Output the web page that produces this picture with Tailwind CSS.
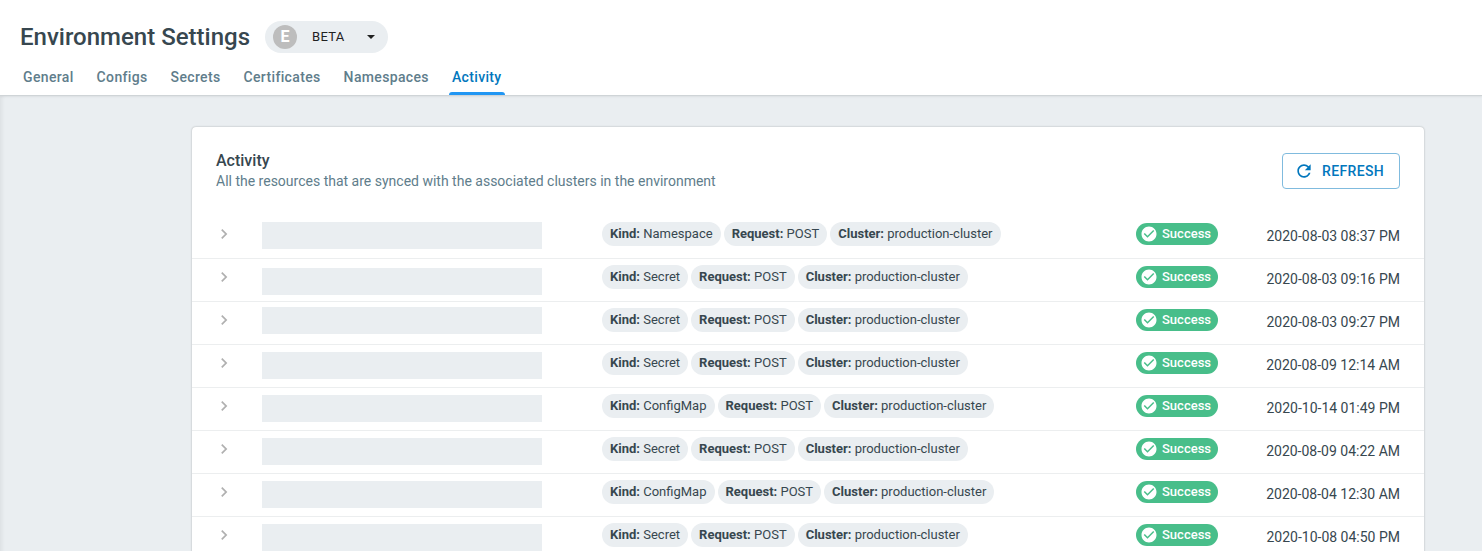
<!DOCTYPE html>
<html lang="en">
<head>
<meta charset="utf-8">
<meta name="viewport" content="width=device-width, initial-scale=1">
<title>Environment Settings</title>
<script src="https://cdn.jsdelivr.net/npm/@tailwindcss/browser@4"></script>
</head>
<body class="min-h-screen overflow-x-hidden bg-[#eaeef1] font-['Roboto',sans-serif] text-[#37474f]">
<svg class="hidden" aria-hidden="true">
  <symbol id="chevron" viewBox="0 0 24 24"><path d="M10 6 8.590 7.410 13.170 12l-4.580 4.590L10 18l6-6z" fill="currentColor"/></symbol>
  <symbol id="check" viewBox="0 0 24 24"><path d="M12 2C6.480 2 2 6.480 2 12s4.480 10 10 10 10-4.480 10-10S17.520 2 12 2zm-2 15-5-5 1.410-1.410L10 14.170l7.590-7.590L19 8l-9 9z" fill="currentColor"/></symbol>
</svg>
<header class="relative border-b border-[#cfd4d7] bg-white px-5 pt-5 shadow-[0_1px_2px_rgba(0,0,0,0.06)]">
  <div class="flex h-8 items-center gap-[15px] pt-[2px]">
    <h1 class="text-2xl font-medium">Environment Settings</h1>
    <button type="button" class="flex h-8 w-[123px] items-center rounded-full bg-[#eaeef1] pr-[11px] pl-2 text-[13px] text-[#212121]">
      <span class="flex size-6 items-center justify-center rounded-full bg-[#bdbdbd] text-base font-bold text-white">E</span>
      <span class="ml-[15px] tracking-wide">BETA</span>
      <svg class="ml-auto size-3" viewBox="0 0 12 12" aria-hidden="true"><path d="M2 4h8L6 8z" fill="currentColor"/></svg>
    </button>
  </div>
  <nav class="mt-2 flex gap-[17px] text-sm font-medium tracking-wide text-[#607d8b]">
    <a href="#general" class="px-[3px] pt-[7px] pb-2">General</a>
    <a href="#configs" class="px-[3px] pt-[7px] pb-2">Configs</a>
    <a href="#secrets" class="px-[3px] pt-[7px] pb-2">Secrets</a>
    <a href="#certificates" class="px-[3px] pt-[7px] pb-2">Certificates</a>
    <a href="#namespaces" class="px-[3px] pt-[7px] pb-2">Namespaces</a>
    <a href="#activity" aria-current="page" class="relative px-[3px] pt-[7px] pb-2 text-[#0277bd]">Activity<span class="absolute inset-x-0 bottom-0 h-[3px] rounded-t bg-[#2196f3]"></span></a>
  </nav>
</header>
<main class="pt-[31px] pr-[58px] pl-48 shadow-[inset_4px_0_4px_-2px_rgba(0,0,0,0.06)]">
  <section class="rounded bg-white pb-6 shadow-[0_0_2px_rgba(0,0,0,0.3)]">
    <div class="flex items-start justify-between px-6 pt-[26px] pb-[25px]">
      <div class="-mt-[2px]">
        <h2 class="text-base leading-5 font-medium">Activity</h2>
        <p class="text-sm text-[#607d8b]">All the resources that are synced with the associated clusters in the environment</p>
      </div>
      <button type="button" class="flex h-9 w-[118px] items-center rounded border border-[#80bbde] pl-[11px] text-sm font-medium text-[#0277bd]">
        <svg class="size-5" viewBox="0 0 24 24" aria-hidden="true"><path d="M17.650 6.350C16.200 4.900 14.210 4 12 4c-4.420 0-7.990 3.580-7.990 8s3.570 8 7.990 8c3.730 0 6.840-2.550 7.730-6h-2.080c-.82 2.330-3.040 4-5.650 4-3.310 0-6-2.690-6-6s2.690-6 6-6c1.660 0 3.140.69 4.220 1.780L13 11h7V4l-2.350 2.350z" fill="currentColor"/></svg>
        <span class="ml-2 tracking-wide">REFRESH</span>
      </button>
    </div>
    <table class="w-full table-fixed border-separate border-spacing-0">
      <colgroup><col class="w-[70px]"><col class="w-[340px]"><col><col class="w-[110px]"><col class="w-[178px]"></colgroup>
      <tbody id="rows"></tbody>
    </table>
  </section>
</main>
<script>
  const entries = [
    ["Namespace", "2020-08-03 08:37 PM", "mt-[6px]"],
    ["Secret", "2020-08-03 09:16 PM", "mt-[9px]"],
    ["Secret", "2020-08-03 09:27 PM", "mt-[5px]"],
    ["Secret", "2020-08-09 12:14 AM", "mt-[7px]"],
    ["ConfigMap", "2020-10-14 01:49 PM", "mt-[7px]"],
    ["Secret", "2020-08-09 04:22 AM", "mt-[7px]"],
    ["ConfigMap", "2020-08-04 12:30 AM", "mt-[7px]"],
    ["Secret", "2020-10-08 04:50 PM", "mt-[7px]"],
  ];
  const chip = (label, value) =>
    `<span class="h-6 rounded-full bg-[#eaeef1] px-2 text-[13px] leading-6 whitespace-nowrap"><b class="font-bold">${label}:</b> ${value}</span>`;
  document.getElementById("rows").innerHTML = entries.map(([kind, time, bar]) => `
    <tr class="h-[43px] align-top *:border-b *:border-[#eceeef]">
      <td class="pt-2 pl-[22px]"><button type="button" aria-label="Expand row" class="block text-[#b0b0b0]"><svg class="size-5"><use href="#chevron"/></svg></button></td>
      <td><div class="${bar} h-[27px] w-[280px] bg-[#eaeef1]"></div></td>
      <td class="pt-[6px]"><div class="flex gap-[3px]">${chip("Kind", kind)}${chip("Request", "POST")}${chip("Cluster", "production-cluster")}</div></td>
      <td class="pt-[7px]"><span class="flex h-[22px] w-[82px] items-center gap-1 rounded-full bg-[#48be8a] pl-1 text-[13px] font-medium text-white"><svg class="size-[18px]"><use href="#check"/></svg>Success</span></td>
      <td class="pt-[10px] pr-6 text-right text-sm whitespace-nowrap">${time}</td>
    </tr>`).join("");
</script>
</body>
</html>
